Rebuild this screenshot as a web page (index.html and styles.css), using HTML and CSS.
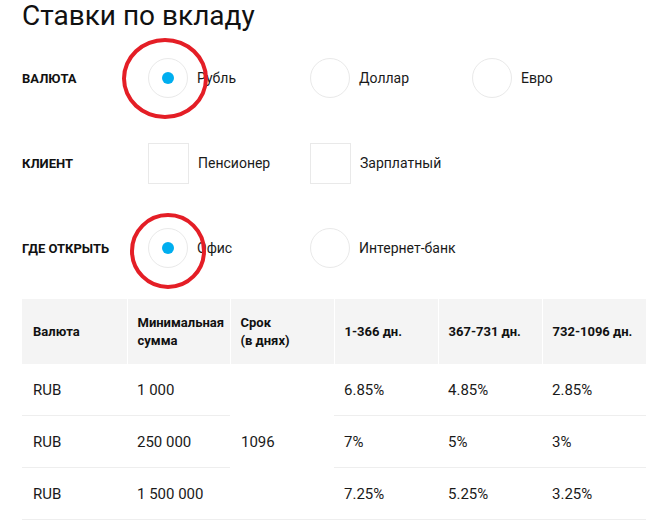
FILE: index.html
```html
<!DOCTYPE html>
<html lang="ru">
<head>
<meta charset="utf-8">
<title>Ставки по вкладу</title>
<link rel="stylesheet" href="styles.css">
</head>
<body>
<div class="page">
  <h1 class="title">Ставки по вкладу</h1>

  <div class="filters">
    <div class="filter-row">
      <div class="filter-label">Валюта</div>
      <div class="options">
        <label class="option">
          <span class="control radio checked"><span class="dot"></span><span class="mark mark-1"></span></span>
          <span class="option-text">Рубль</span>
        </label>
        <label class="option">
          <span class="control radio"></span>
          <span class="option-text">Доллар</span>
        </label>
        <label class="option">
          <span class="control radio"></span>
          <span class="option-text">Евро</span>
        </label>
      </div>
    </div>

    <div class="filter-row">
      <div class="filter-label">Клиент</div>
      <div class="options">
        <label class="option">
          <span class="control checkbox"></span>
          <span class="option-text">Пенсионер</span>
        </label>
        <label class="option">
          <span class="control checkbox"></span>
          <span class="option-text">Зарплатный</span>
        </label>
      </div>
    </div>

    <div class="filter-row">
      <div class="filter-label">Где открыть</div>
      <div class="options">
        <label class="option">
          <span class="control radio checked"><span class="dot"></span><span class="mark mark-2"></span></span>
          <span class="option-text">Офис</span>
        </label>
        <label class="option">
          <span class="control radio"></span>
          <span class="option-text">Интернет-банк</span>
        </label>
      </div>
    </div>
  </div>

  <table class="rates">
    <colgroup>
      <col class="c1"><col class="c2"><col class="c3"><col class="c4"><col class="c5"><col class="c6">
    </colgroup>
    <thead>
      <tr>
        <th>Валюта</th>
        <th>Минимальная<br>сумма</th>
        <th>Срок<br>(в днях)</th>
        <th>1-366 дн.</th>
        <th>367-731 дн.</th>
        <th>732-1096 дн.</th>
      </tr>
    </thead>
    <tbody>
      <tr>
        <td>RUB</td>
        <td>1 000</td>
        <td rowspan="3" class="term">1096</td>
        <td>6.85%</td>
        <td>4.85%</td>
        <td>2.85%</td>
      </tr>
      <tr>
        <td>RUB</td>
        <td>250 000</td>
        <td>7%</td>
        <td>5%</td>
        <td>3%</td>
      </tr>
      <tr>
        <td>RUB</td>
        <td>1 500 000</td>
        <td>7.25%</td>
        <td>5.25%</td>
        <td>3.25%</td>
      </tr>
    </tbody>
  </table>
</div>
</body>
</html>
```

FILE: styles.css
```css
html, body {
  margin: 0;
  padding: 0;
  background: #ffffff;
}

body {
  font-family: Roboto, "Noto Sans", "DejaVu Sans", sans-serif;
  color: #1a1a1a;
}

.page {
  padding: 0 17px 0 22px;
}

.title {
  margin: 0;
  font-size: 28px;
  line-height: 32px;
  font-weight: 400;
  color: #111111;
}

.filters {
  display: flex;
  flex-direction: column;
  gap: 45px;
  margin-top: 26px;
}

.filter-row {
  display: flex;
  align-items: center;
  height: 40px;
}

.filter-label {
  width: 126px;
  flex: none;
  font-size: 13px;
  font-weight: 700;
  text-transform: uppercase;
  color: #111111;
}

.options {
  display: grid;
  grid-template-columns: repeat(3, 162px);
}

.option {
  display: flex;
  align-items: center;
  gap: 9px;
}

.control {
  position: relative;
  flex: none;
  box-sizing: border-box;
  width: 40px;
  height: 40px;
  border: 1px solid #e9e9e9;
  display: flex;
  align-items: center;
  justify-content: center;
}

.radio {
  border-radius: 50%;
}

.checkbox {
  width: 41px;
  height: 41px;
}

.dot {
  width: 12px;
  height: 12px;
  border-radius: 50%;
  background: #00aeef;
}

.option-text {
  font-size: 14px;
  color: #1a1a1a;
}

.mark {
  position: absolute;
  box-sizing: border-box;
  border: 4px solid #e41e26;
  border-radius: 50%;
}

.mark-1 {
  left: -27px;
  top: -21px;
  width: 86px;
  height: 81px;
}

.mark-2 {
  left: -19px;
  top: -16px;
  width: 76px;
  height: 76px;
}

.rates {
  margin-top: 31px;
  width: 624px;
  border-collapse: collapse;
  table-layout: fixed;
}

.c1 { width: 105px; }
.c2 { width: 103px; }
.c3 { width: 104px; }
.c4 { width: 104px; }
.c5 { width: 104px; }
.c6 { width: 104px; }

.rates th {
  height: 65px;
  padding: 0 10px;
  background: #f4f4f4;
  border-left: 1px solid #ffffff;
  font-size: 13px;
  line-height: 18px;
  font-weight: 700;
  text-align: left;
  vertical-align: middle;
  color: #111111;
}

.rates th:first-child {
  border-left: none;
  padding-left: 11px;
}

.rates td {
  height: 51px;
  padding: 0 10px;
  border-bottom: 1px solid #eeeeee;
  font-size: 15px;
  color: #1a1a1a;
  vertical-align: middle;
}

.rates td:first-child {
  padding-left: 11px;
}

.rates td.term {
  padding-left: 11px;
}
```
